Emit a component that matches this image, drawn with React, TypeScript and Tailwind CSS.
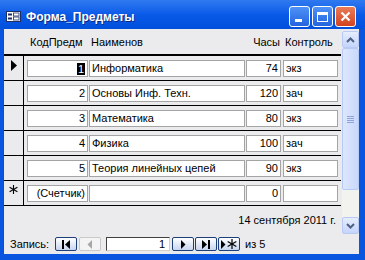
import React from 'react';

type Rec = { id: string; name: string; hours: string; ctrl: string; current?: boolean };

const records: Rec[] = [
  { id: '1', name: 'Информатика', hours: '74', ctrl: 'экз', current: true },
  { id: '2', name: 'Основы Инф. Техн.', hours: '120', ctrl: 'зач' },
  { id: '3', name: 'Математика', hours: '80', ctrl: 'экз' },
  { id: '4', name: 'Физика', hours: '100', ctrl: 'зач' },
  { id: '5', name: 'Теория линейных цепей', hours: '90', ctrl: 'экз' },
];

const FormIcon = () => (
  <svg width="15" height="11" viewBox="0 0 15 11">
    <rect x="0.5" y="0.5" width="14" height="10" fill="#ffffff" stroke="#1d2f63" />
    <rect x="2" y="2.5" width="4" height="2" fill="#1d2f63" />
    <rect x="2" y="6.5" width="4" height="2" fill="#1d2f63" />
    <rect x="7.5" y="2" width="5.5" height="3" fill="#ffffff" stroke="#1d2f63" strokeWidth="0.8" />
    <rect x="7.5" y="6" width="5.5" height="3" fill="#ffffff" stroke="#1d2f63" strokeWidth="0.8" />
  </svg>
);

const Asterisk = ({ size = 9, color = '#000' }: { size?: number; color?: string }) => (
  <svg width={size} height={size} viewBox="0 0 9 9">
    <g stroke={color} strokeWidth="1.1">
      <line x1="4.5" y1="0" x2="4.5" y2="9" />
      <line x1="0.6" y1="2.3" x2="8.4" y2="6.7" />
      <line x1="8.4" y1="2.3" x2="0.6" y2="6.7" />
    </g>
  </svg>
);

type NavKind = 'first' | 'prev' | 'next' | 'last' | 'new';

const NavIcon = ({ kind }: { kind: NavKind }) => {
  if (kind === 'first')
    return (
      <svg width="10" height="9" viewBox="0 0 10 9">
        <rect x="1" y="0" width="2" height="9" fill="#000" />
        <polygon points="9,0 9,9 4,4.5" fill="#000" />
      </svg>
    );
  if (kind === 'prev')
    return (
      <svg width="10" height="9" viewBox="0 0 10 9">
        <polygon points="7,0 7,9 2.5,4.5" fill="#a7a7a7" />
      </svg>
    );
  if (kind === 'next')
    return (
      <svg width="10" height="9" viewBox="0 0 10 9">
        <polygon points="3,0 3,9 7.5,4.5" fill="#000" />
      </svg>
    );
  if (kind === 'last')
    return (
      <svg width="10" height="9" viewBox="0 0 10 9">
        <polygon points="1,0 1,9 6,4.5" fill="#000" />
        <rect x="7" y="0" width="2" height="9" fill="#000" />
      </svg>
    );
  return (
    <div className="flex items-center gap-[1px]">
      <svg width="5" height="9" viewBox="0 0 5 9">
        <polygon points="0,0 0,9 4.5,4.5" fill="#000" />
      </svg>
      <Asterisk size={10} />
    </div>
  );
};

const NavButton = ({ kind, disabled }: { kind: NavKind; disabled?: boolean }) => (
  <div
    className={
      disabled
        ? 'w-[22px] h-[14px] flex items-center justify-center rounded-[2px] border border-[#c9c9c9] bg-[#f4f4f4]'
        : 'w-[22px] h-[14px] flex items-center justify-center rounded-[2px] border border-[#1c3f7a] bg-gradient-to-b from-white to-[#c9d5ee]'
    }
  >
    <NavIcon kind={kind} />
  </div>
);

const Box = ({ w, right, children, selected }: { w: string; right?: boolean; children?: React.ReactNode; selected?: boolean }) => (
  <div
    className={`${w} h-[17px] bg-white border border-[#a4a4a4] flex items-center ${right ? 'justify-end pr-[2px]' : 'pl-[2px]'} overflow-hidden whitespace-nowrap`}
  >
    {selected ? <span className="bg-black text-white leading-[12px] px-[1px]">{children}</span> : children}
  </div>
);

const Row = ({ sel, id, name, hours, ctrl, current }: { sel: React.ReactNode; id: string; name: string; hours: string; ctrl: string; current?: boolean }) => (
  <div className="flex h-[25px] border-b border-black">
    <div className="w-[20px] border-r border-black flex justify-center pt-[4px]">{sel}</div>
    <div className="flex pl-[3px] pt-[4px]">
      <Box w="w-[61px]" right selected={current}>{id}</Box>
      <div className="ml-[1px]">
        <Box w="w-[156px]">{name}</Box>
      </div>
      <div className="ml-[1px]">
        <Box w="w-[35px]" right>{hours}</Box>
      </div>
      <div className="ml-[2px]">
        <Box w="w-[55px]">{ctrl}</Box>
      </div>
    </div>
  </div>
);

const ScrollButton = ({ up }: { up?: boolean }) => (
  <div className="h-[17px] rounded-[2px] border border-[#b7caf5] bg-gradient-to-b from-[#e6eefd] to-[#c4d4fb] flex items-center justify-center">
    <svg width="9" height="6" viewBox="0 0 9 6">
      <polyline
        points={up ? '1,5 4.5,1.5 8,5' : '1,1 4.5,4.5 8,1'}
        fill="none"
        stroke="#4d6185"
        strokeWidth="2"
      />
    </svg>
  </div>
);

export default function App() {
  return (
    <div className="w-[365px] h-[260px] overflow-hidden flex flex-col bg-[#0a55e0] font-['Liberation_Sans',Arial,sans-serif] text-[11px] text-black">
      {/* Title bar */}
      <div className="h-[29px] shrink-0 flex items-center pt-[4px] pl-[6px] pr-[9px] bg-gradient-to-b from-[#2f7af0] via-[#0a5ae8] to-[#0050dc]">
        <FormIcon />
        <span className="ml-[5px] text-white font-bold text-[12px] [text-shadow:1px_1px_0_#0a2a80]">
          Форма_Предметы
        </span>
        <div className="ml-auto flex gap-[2px]">
          <div className="w-[21px] h-[21px] rounded-[3px] border border-white bg-gradient-to-b from-[#4f92f7] to-[#2463de] flex items-end pl-[5px] pb-[4px]">
            <div className="w-[7px] h-[3px] bg-white" />
          </div>
          <div className="w-[21px] h-[21px] rounded-[3px] border border-white bg-gradient-to-b from-[#4f92f7] to-[#2463de] flex items-center justify-center">
            <div className="w-[11px] h-[10px] border border-white border-t-[3px]" />
          </div>
          <div className="w-[21px] h-[21px] rounded-[3px] border border-white bg-gradient-to-b from-[#ea7b57] to-[#d2421c] flex items-center justify-center">
            <svg width="11" height="11" viewBox="0 0 11 11">
              <path d="M1.5 1.5 L9.5 9.5 M9.5 1.5 L1.5 9.5" stroke="#fff" strokeWidth="2.2" />
            </svg>
          </div>
        </div>
      </div>

      <div className="flex-1 flex min-h-0">
        <div className="w-[3px] bg-[#0a55e0]" />
        {/* Client */}
        <div className="w-[356px] flex flex-col bg-[#ebebee] border-l border-[#3a4a6a]">
          <div className="flex h-[206px]">
            <div className="w-[337px] flex flex-col">
              {/* Header */}
              <div className="h-[27px] border-b-2 border-black flex items-end pb-[4px]">
                <div className="ml-[23px] w-[61px] pl-[3px]">КодПредм</div>
                <div className="ml-[1px] w-[156px] pl-[2px]">Наименов</div>
                <div className="ml-[1px] w-[35px] text-right pr-[1px]">Часы</div>
                <div className="ml-[2px] w-[55px] pl-[2px] whitespace-nowrap">Контроль</div>
              </div>
              {records.map((r) => (
                <Row
                  key={r.id}
                  sel={
                    r.current ? (
                      <svg width="7" height="11" viewBox="0 0 7 11" className="ml-[1px]">
                        <polygon points="0,0 0,11 6,5.5" fill="#000" />
                      </svg>
                    ) : null
                  }
                  id={r.id}
                  name={r.name}
                  hours={r.hours}
                  ctrl={r.ctrl}
                  current={r.current}
                />
              ))}
              <Row sel={<Asterisk />} id="(Счетчик)" name="" hours="0" ctrl="" />
              {/* Footer */}
              <div className="flex-1 flex items-center justify-end pr-[5px]">14 сентября 2011 г.</div>
            </div>
            {/* Scrollbar */}
            <div className="ml-[1px] w-[17px] mt-[2px] mb-[1px] flex flex-col bg-[#f2f2ef]">
              <ScrollButton up />
              <div className="h-[142px] rounded-[2px] border border-[#b7caf5] bg-gradient-to-r from-[#dde7fd] to-[#c9d8fb] flex flex-col items-center justify-center gap-[1px]">
                <div className="w-[7px] h-[1px] bg-[#8da4dc]" />
                <div className="w-[7px] h-[1px] bg-[#8da4dc]" />
                <div className="w-[7px] h-[1px] bg-[#8da4dc]" />
                <div className="w-[7px] h-[1px] bg-[#8da4dc]" />
              </div>
              <div className="flex-1" />
              <ScrollButton />
            </div>
          </div>
          {/* Navigation */}
          <div className="flex-1 flex items-center pl-[6px] pb-[1px]">
            <span className="w-[45px]">Запись:</span>
            <NavButton kind="first" />
            <div className="ml-[2px]">
              <NavButton kind="prev" disabled />
            </div>
            <div className="ml-[5px] w-[64px] h-[14px] bg-white border border-t-[#404040] border-l-[#404040] border-b-[#d4d0c8] border-r-[#d4d0c8] flex items-center justify-end pr-[4px] leading-[12px]">
              1
            </div>
            <div className="ml-[2px]">
              <NavButton kind="next" />
            </div>
            <div className="ml-[1px]">
              <NavButton kind="last" />
            </div>
            <div className="ml-[1px]">
              <NavButton kind="new" />
            </div>
            <span className="ml-[5px]">из 5</span>
          </div>
        </div>
        <div className="flex-1 bg-[#0a55e0]" />
      </div>
      <div className="h-[6px] shrink-0 bg-[#0a55e0]" />
    </div>
  );
}
